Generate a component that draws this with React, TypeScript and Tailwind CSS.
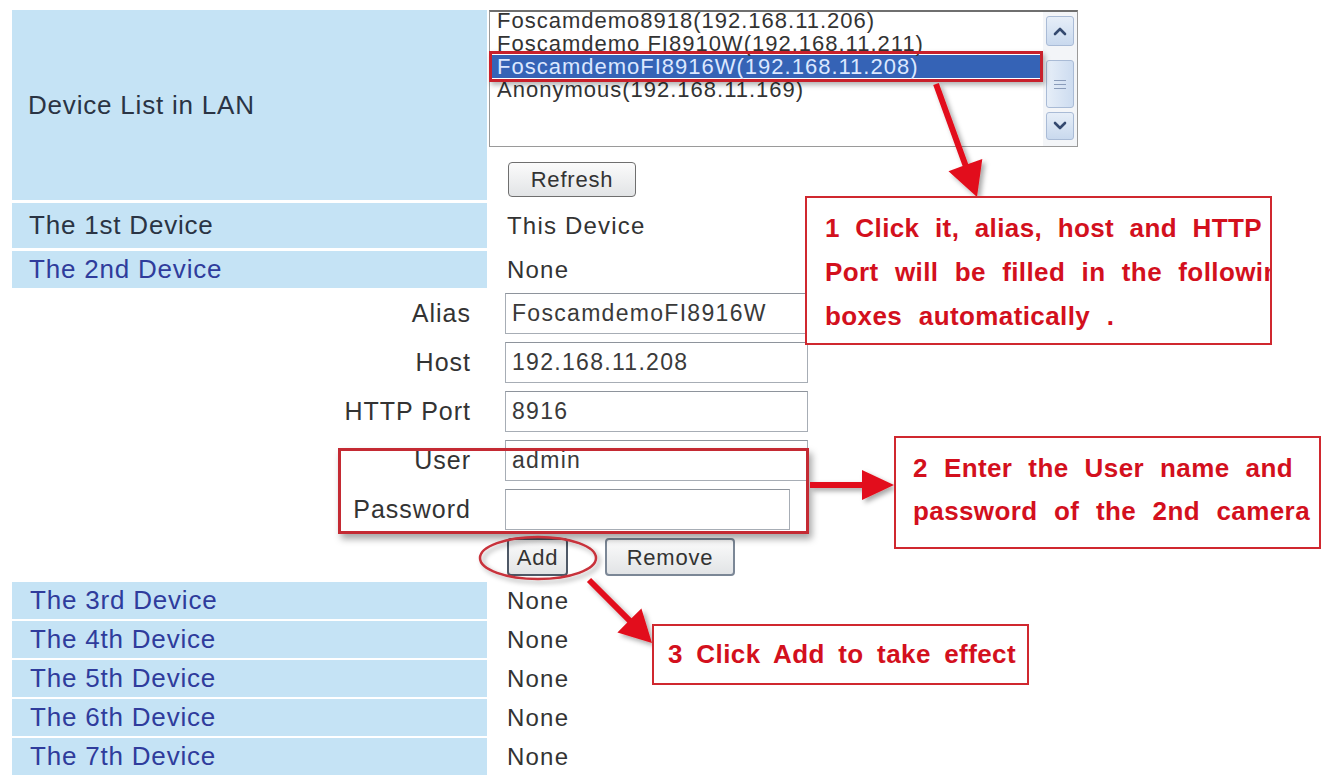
import React from "react";

const lanDevices = [
  { name: "Foscamdemo8918(192.168.11.206)", selected: false },
  { name: "Foscamdemo FI8910W(192.168.11.211)", selected: false },
  { name: "FoscamdemoFI8916W(192.168.11.208)", selected: true },
  { name: "Anonymous(192.168.11.169)", selected: false },
];

const fields = [
  { label: "Alias", value: "FoscamdemoFI8916W", w: "w-[303px]" },
  { label: "Host", value: "192.168.11.208", w: "w-[303px]" },
  { label: "HTTP Port", value: "8916", w: "w-[303px]" },
  { label: "User", value: "admin", w: "w-[303px]" },
  { label: "Password", value: "", w: "w-[285px]" },
];

const otherDevices = ["The 3rd Device", "The 4th Device", "The 5th Device", "The 6th Device", "The 7th Device"];

// points for a thick arrow from (x1,y1) to tip (x2,y2)
function arrow(x1: number, y1: number, x2: number, y2: number, w: number, hl: number, hw: number) {
  const dx = x2 - x1;
  const dy = y2 - y1;
  const len = Math.hypot(dx, dy);
  const ux = dx / len;
  const uy = dy / len;
  const px = -uy;
  const py = ux;
  const bx = x2 - ux * hl;
  const by = y2 - uy * hl;
  const pts = [
    [x1 + (px * w) / 2, y1 + (py * w) / 2],
    [bx + (px * w) / 2, by + (py * w) / 2],
    [bx + px * hw, by + py * hw],
    [x2, y2],
    [bx - px * hw, by - py * hw],
    [bx - (px * w) / 2, by - (py * w) / 2],
    [x1 - (px * w) / 2, y1 - (py * w) / 2],
  ];
  return pts.map((p) => p.map((n) => n.toFixed(1)).join(",")).join(" ");
}

function Chevron({ up }: { up?: boolean }) {
  return (
    <svg width="14" height="10" viewBox="0 0 14 10">
      <path
        d={up ? "M2 8 L7 3 L12 8" : "M2 2 L7 7 L12 2"}
        fill="none"
        stroke="#34496f"
        strokeWidth="2.6"
        strokeLinecap="round"
        strokeLinejoin="round"
      />
    </svg>
  );
}

function Button({ children, className }: { children: React.ReactNode; className?: string }) {
  return (
    <div
      className={`flex items-center justify-center rounded-[4px] bg-gradient-to-b from-[#fbfbfb] to-[#e2e4e6] text-[22px] tracking-[0.8px] text-[#333] ${className ?? ""}`}
    >
      {children}
    </div>
  );
}

export default function App() {
  return (
    <div className="relative w-[1329px] h-[776px] overflow-hidden bg-white font-['Liberation_Sans',Arial,sans-serif]">
      <div className="flex flex-col pt-[10px] pl-[12px]">
        {/* Device list row */}
        <div className="flex h-[190px]">
          <div className="w-[475px] bg-[#c5e3f5] flex items-center pl-[16px] text-[26px] tracking-[0.8px] text-[#2a3444]">
            Device List in LAN
          </div>
          <div className="flex flex-col pl-[2px]">
            <div className="flex w-[589px] h-[137px] border border-[#9a9a9a] border-t-2 border-t-[#6f6f6f] bg-white">
              <div className="flex-1 -mt-[3px] text-[22px] leading-[23px] tracking-[1px] text-[#333]">
                {lanDevices.map((d) => (
                  <div
                    key={d.name}
                    className={`h-[23px] pl-[7px] whitespace-nowrap ${d.selected ? "bg-[#3563b6] text-[#dbe7ff]" : ""}`}
                  >
                    {d.name}
                  </div>
                ))}
              </div>
              {/* scrollbar */}
              <div className="w-[34px] bg-[#f3f5f8] flex flex-col items-center pt-[4px]">
                <div className="w-[28px] h-[30px] rounded-[3px] border border-[#a9bbd6] bg-gradient-to-b from-[#e6eef8] to-[#c9d9ee] flex items-center justify-center">
                  <Chevron up />
                </div>
                <div className="mt-[14px] w-[28px] h-[48px] rounded-[3px] border border-[#a9bbd6] bg-gradient-to-r from-[#e6eef8] to-[#cddcf0] flex flex-col items-center justify-center gap-[3px]">
                  <div className="w-[12px] h-[1px] bg-[#8a9cba]" />
                  <div className="w-[12px] h-[1px] bg-[#8a9cba]" />
                  <div className="w-[12px] h-[1px] bg-[#8a9cba]" />
                </div>
                <div className="mt-[4px] w-[28px] h-[28px] rounded-[3px] border border-[#a9bbd6] bg-gradient-to-b from-[#e6eef8] to-[#c9d9ee] flex items-center justify-center">
                  <Chevron />
                </div>
              </div>
            </div>
            <Button className="mt-[15px] ml-[19px] w-[128px] h-[35px] border border-[#6f6f6f]">Refresh</Button>
          </div>
        </div>

        {/* 1st / 2nd device */}
        <div className="flex h-[45px] mt-[3px]">
          <div className="w-[475px] bg-[#c5e3f5] flex items-center pl-[17px] text-[26px] tracking-[0.8px] text-[#2a3444]">
            The 1st Device
          </div>
          <div className="flex items-center pl-[20px] text-[24px] tracking-[1.2px] text-[#333]">This Device</div>
        </div>
        <div className="flex h-[37px] mt-[3px]">
          <div className="w-[475px] bg-[#c5e3f5] flex items-center pl-[17px] text-[26px] tracking-[0.8px] text-[#2f3c9c]">
            The 2nd Device
          </div>
          <div className="flex items-center pl-[20px] text-[24px] tracking-[1.2px] text-[#333]">None</div>
        </div>

        {/* form */}
        <div className="flex flex-col gap-[8px] pt-[5px]">
          {fields.map((f) => (
            <div key={f.label} className="flex items-center h-[41px]">
              <div className="w-[459px] text-right text-[25px] tracking-[1px] text-[#333]">{f.label}</div>
              <div
                className={`ml-[34px] ${f.w} h-[41px] border border-[#a7adb5] border-t-[#8e949c] bg-white flex items-center pl-[6px] text-[23px] tracking-[1.3px] text-[#3a3a3a]`}
              >
                {f.value}
              </div>
            </div>
          ))}
        </div>

        {/* buttons */}
        <div className="flex h-[38px] mt-[8px] pl-[495px] gap-[37px]">
          <Button className="w-[61px] h-[38px] border-2 border-[#4e5866] rounded-[3px]">Add</Button>
          <Button className="w-[130px] h-[38px] border-2 border-[#7b8796]">Remove</Button>
        </div>

        {/* other devices */}
        <div className="flex flex-col gap-[2px] mt-[6px]">
          {otherDevices.map((d) => (
            <div key={d} className="flex h-[37px]">
              <div className="w-[475px] bg-[#c5e3f5] flex items-center pl-[18px] text-[26px] tracking-[0.8px] text-[#2f3c9c]">
                {d}
              </div>
              <div className="flex items-center pl-[20px] text-[24px] tracking-[1.2px] text-[#333]">None</div>
            </div>
          ))}
        </div>
      </div>

      {/* annotation: selected row outline */}
      <div className="absolute left-[489px] top-[51px] w-[554px] h-[31px] border-[3px] border-[#c8202b] shadow-[2px_3px_5px_rgba(0,0,0,0.3)]" />

      {/* annotation: user/password frame */}
      <div className="absolute left-[338px] top-[448px] w-[471px] h-[86px] border-[3px] border-[#c42a33] shadow-[3px_5px_7px_rgba(0,0,0,0.35)]" />

      {/* arrows and ellipse */}
      <svg className="absolute inset-0 pointer-events-none" width="1329" height="776" viewBox="0 0 1329 776">
        <defs>
          <filter id="sh" x="-20%" y="-20%" width="140%" height="140%">
            <feDropShadow dx="3" dy="3" stdDeviation="2.5" floodColor="#000" floodOpacity="0.35" />
          </filter>
        </defs>
        <ellipse cx="538" cy="558" rx="58" ry="21" fill="none" stroke="#c8303a" strokeWidth="2.5" filter="url(#sh)" />
        <g fill="#e2111b" filter="url(#sh)">
          <polygon points={arrow(936, 84, 977, 197, 6, 34, 18)} />
          <polygon points={arrow(810, 485, 894, 485, 6, 32, 15)} />
          <polygon points={arrow(589, 580, 652, 643, 6, 32, 17)} />
        </g>
      </svg>

      {/* callout 1 */}
      <div className="absolute left-[805px] top-[196px] w-[467px] h-[149px] border-2 border-[#d0282f] bg-white overflow-hidden pt-[8px] pl-[18px] text-[26px] leading-[44px] font-bold tracking-[0.4px] text-[#d3101d] whitespace-nowrap">
        <div className="w-[437px] [text-align-last:justify]">1 Click it, alias, host and HTTP</div>
        <div className="w-[471px] [text-align-last:justify]">Port will be filled in the following</div>
        <div className="[word-spacing:9px]">boxes automatically .</div>
      </div>

      {/* callout 2 */}
      <div className="absolute left-[894px] top-[436px] w-[427px] h-[113px] border-2 border-[#d0282f] bg-white pt-[9px] pl-[17px] text-[26px] leading-[43px] font-bold tracking-[0.4px] text-[#d3101d] whitespace-nowrap">
        <div className="w-[380px] [text-align-last:justify]">2 Enter the User name and</div>
        <div className="w-[397px] [text-align-last:justify]">password of the 2nd camera</div>
      </div>

      {/* callout 3 */}
      <div className="absolute left-[652px] top-[624px] w-[377px] h-[61px] border-2 border-[#d0282f] bg-white flex items-center pl-[14px] text-[26px] font-bold tracking-[0.4px] text-[#d3101d] whitespace-nowrap">
        <div className="w-[348px] [text-align-last:justify]">3 Click Add to take effect</div>
      </div>
    </div>
  );
}
